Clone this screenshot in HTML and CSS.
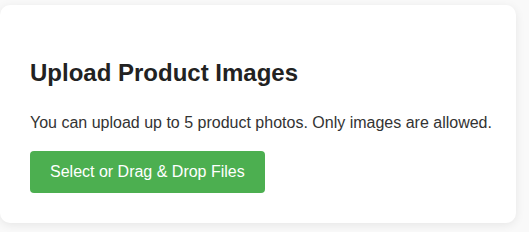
FILE: index.html
```html
<!DOCTYPE html>
<html lang="en">
<head>
  <meta charset="UTF-8">
  <meta name="viewport" content="width=device-width, initial-scale=1.0">
  <title>upload</title>
  <link rel="stylesheet" href="styles.css">
</head>
<body>
  <div class="upload-card">
    <h2>Upload Product Images</h2>
    <p>You can upload up to 5 product photos. Only images are allowed.</p>
    <button class="upload-btn">Select or Drag &amp; Drop Files</button>
  </div>
</body>
</html>
```

FILE: styles.css
```css
body {
  margin: 0;
  padding: 5px 13px 9px 0;
  background: #f9f9f9;
  font-family: "Liberation Sans", Arial, sans-serif;
  line-height: 1.5;
  color: #333;
}

.upload-card {
  background: #fff;
  border-radius: 10px;
  box-shadow: 0 2px 10px rgba(0, 0, 0, 0.08);
  padding: 30px;
}

.upload-card h2 {
  margin: 20px 0;
  font-size: 24px;
  color: #222;
}

.upload-card p {
  margin: 0 0 16px;
  font-size: 16px;
  white-space: nowrap; /* fits the card exactly */
}

.upload-btn {
  display: inline-block;
  padding: 12px 20px;
  border: none;
  border-radius: 4px;
  background: #4caf50;
  color: #fff;
  font-family: inherit;
  font-size: 16px;
  cursor: pointer;
}
```
